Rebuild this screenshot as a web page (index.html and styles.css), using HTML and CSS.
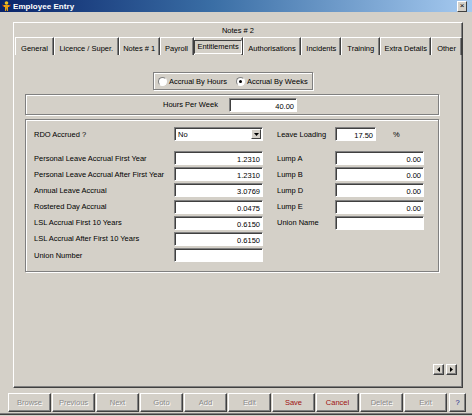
FILE: index.html
```html
<!DOCTYPE html>
<html>
<head>
<meta charset="utf-8">
<link rel="stylesheet" href="styles.css">
</head>
<body>
<div class="window">
  <div class="titlebar">
    <svg class="appicon" width="9" height="10" viewBox="0 0 9 10">
      <circle cx="4.5" cy="2" r="1.8" fill="#f0c020"/>
      <path d="M1 4 L8 4 L7 6 L6 6 L6 10 L5 10 L4.5 7 L4 10 L3 10 L3 6 L2 6 Z" fill="#e8a010"/>
      <path d="M0 3 L1 4 L2 6 L1 6 Z" fill="#c03010"/>
      <path d="M9 3 L8 4 L7 6 L8 6 Z" fill="#c03010"/>
    </svg>
    <span class="title">Employee Entry</span>
    <div class="closebtn">×</div>
  </div>
  <div class="client">
    <div class="tabctl">
      <div class="backtab">Notes # 2</div>
      <div class="tabrow">
        <div class="tab">General</div>
        <div class="tab">Licence / Super.</div>
        <div class="tab">Notes # 1</div>
        <div class="tab">Payroll</div>
        <div class="tab selected"><span class="focus">Entitlements</span></div>
        <div class="tab">Authorisations</div>
        <div class="tab">Incidents</div>
        <div class="tab">Training</div>
        <div class="tab">Extra Details</div>
        <div class="tab">Other</div>
      </div>
      <div class="page">
        <div class="radiobox">
          <label class="radio"><span class="circle"></span>Accrual By Hours</label>
          <label class="radio"><span class="circle on"></span>Accrual By Weeks</label>
        </div>
        <div class="hourspanel">
          <span class="hlabel">Hours Per Week</span>
          <div class="input hours">40.00</div>
        </div>
        <div class="mainpanel">
          <div class="toprow">
            <span class="lbl left">RDO Accrued ?</span>
            <div class="select"><span class="selval">No</span><span class="dropbtn"><svg width="5" height="3" viewBox="0 0 5 3"><path d="M0 0 H5 L2.5 3 Z" fill="#000"/></svg></span></div>
            <span class="lbl right">Leave Loading</span>
            <div class="input small">17.50</div>
            <span class="pct">%</span>
          </div>
          <div class="grid">
            <span class="lbl left">Personal Leave Accrual First Year</span>
            <div class="input">1.2310</div>
            <span class="lbl right">Lump A</span>
            <div class="input">0.00</div>

            <span class="lbl left">Personal Leave Accrual After First Year</span>
            <div class="input">1.2310</div>
            <span class="lbl right">Lump B</span>
            <div class="input">0.00</div>

            <span class="lbl left">Annual Leave Accrual</span>
            <div class="input">3.0769</div>
            <span class="lbl right">Lump D</span>
            <div class="input">0.00</div>

            <span class="lbl left">Rostered Day Accrual</span>
            <div class="input">0.0475</div>
            <span class="lbl right">Lump E</span>
            <div class="input">0.00</div>

            <span class="lbl left">LSL Accrual First 10 Years</span>
            <div class="input">0.6150</div>
            <span class="lbl right">Union Name</span>
            <div class="input"></div>

            <span class="lbl left">LSL Accrual After First 10 Years</span>
            <div class="input">0.6150</div>
            <span></span><span></span>

            <span class="lbl left">Union Number</span>
            <div class="input"></div>
            <span></span><span></span>
          </div>
        </div>
        <div class="scrollarrows">
          <div class="arrow"><svg width="3" height="5" viewBox="0 0 3 5"><path d="M3 0 V5 L0 2.5 Z" fill="#000"/></svg></div>
          <div class="arrow"><svg width="3" height="5" viewBox="0 0 3 5"><path d="M0 0 V5 L3 2.5 Z" fill="#000"/></svg></div>
        </div>
      </div>
    </div>
    <div class="buttons">
      <div class="btn disabled">Browse</div>
      <div class="btn disabled">Previous</div>
      <div class="btn disabled">Next</div>
      <div class="btn disabled">Goto</div>
      <div class="btn disabled">Add</div>
      <div class="btn disabled">Edit</div>
      <div class="btn red">Save</div>
      <div class="btn red">Cancel</div>
      <div class="btn disabled">Delete</div>
      <div class="btn disabled">Exit</div>
      <div class="btn help">?</div>
    </div>
  </div>
</div>
</body>
</html>
```
FILE: styles.css
```css
html, body {
  margin: 0;
  padding: 0;
}
body {
  width: 472px;
  height: 416px;
  overflow: hidden;
  background: #d4d0c8;
  font-family: "Liberation Sans", Arial, sans-serif;
  font-size: 7.5px;
  color: #000;
}
.window {
  width: 472px;
  height: 416px;
  display: flex;
  flex-direction: column;
  box-sizing: border-box;
  border-bottom: 1px solid #d4d0c8;
  white-space: nowrap;
}
.titlebar {
  height: 12px;
  flex: none;
  background: linear-gradient(to right, #0a246a 0%, #3a6ea5 45%, #a6caf0 100%);
  display: flex;
  align-items: center;
  color: #fff;
  font-weight: bold;
  font-size: 8px;
  padding-left: 2px;
}
.appicon {
  margin-right: 2px;
  flex: none;
}
.title {
  flex: 1;
  letter-spacing: 0.05px;
}
.closebtn {
  width: 8px;
  height: 9px;
  margin-right: 5px;
  background: #d4d0c8;
  border-top: 1px solid #fff;
  border-left: 1px solid #fff;
  border-right: 1px solid #404040;
  border-bottom: 1px solid #404040;
  color: #000;
  font-size: 8px;
  font-weight: normal;
  line-height: 8px;
  text-align: center;
}
.client {
  flex: 1;
  display: flex;
  flex-direction: column;
  padding: 10px 0 0 8px;
  border-bottom: 1px solid #404040;
  box-shadow: inset 0 -1px 0 #808080;
}
.tabctl {
  margin-left: 5px;
  width: 450px;
  height: 366px;
  display: flex;
  flex-direction: column;
}
.backtab {
  height: 15px;
  box-sizing: border-box;
  border-top: 1px solid #fff;
  border-left: 1px solid #fff;
  border-right: 1px solid #404040;
  box-shadow: inset -1px 0 0 #808080;
  display: flex;
  align-items: center;
  justify-content: center;
  padding-top: 1px;
}
.tabrow {
  height: 18px;
  display: flex;
  box-sizing: border-box;
  border-left: 1px solid #fff;
  border-right: 1px solid #404040;
  padding-left: 1px;
}
.tab {
  box-sizing: border-box;
  height: 18px;
  border-top: 1px solid #fff;
  border-left: 1px solid #fff;
  border-right: 1px solid #404040;
  box-shadow: inset -1px 0 0 #808080;
  display: flex;
  align-items: center;
  justify-content: center;
  padding-top: 3px;
}
.tab:nth-child(1) { width: 39px; }
.tab:nth-child(2) { width: 65px; }
.tab:nth-child(3) { width: 41px; }
.tab:nth-child(4) { width: 34px; }
.tab:nth-child(5) { width: 49px; }
.tab:nth-child(6) { width: 59px; }
.tab:nth-child(7) { width: 40px; }
.tab:nth-child(8) { width: 39px; }
.tab:nth-child(9) { width: 51px; }
.tab:nth-child(10) { width: 31px; }
.tab.selected {
  align-items: flex-start;
  padding-top: 2px;
}
.focus {
  display: block;
  padding: 1px 2px 2px 2px;
  border-top: 1px solid #404040;
  border-left: 1px solid #404040;
  border-right: 1px solid #fff;
  border-bottom: 1px solid #fff;
}
.page {
  flex: 1;
  display: flex;
  flex-direction: column;
  box-sizing: border-box;
  border-left: 1px solid #fff;
  border-right: 1px solid #404040;
  border-bottom: 1px solid #404040;
  box-shadow: inset -1px -1px 0 #808080;
  padding-left: 11px;
}
.radiobox {
  margin-top: 17px;
  margin-left: 128px;
  width: 160px;
  height: 18px;
  box-sizing: border-box;
  border: 1px solid #808080;
  box-shadow: 1px 1px 0 #fff, inset 1px 1px 0 #fff;
  display: flex;
  align-items: center;
  padding-left: 4px;
}
.radio {
  display: flex;
  align-items: center;
  margin-right: 9px;
}
.circle {
  width: 9px;
  height: 9px;
  box-sizing: border-box;
  border-radius: 50%;
  background: #fff;
  border: 1px solid;
  border-color: #808080 #fff #fff #808080;
  margin-right: 2px;
  position: relative;
}
.circle.on::after {
  content: "";
  position: absolute;
  left: 2px;
  top: 2px;
  width: 3px;
  height: 3px;
  border-radius: 50%;
  background: #000;
}
.hourspanel {
  margin-top: 4px;
  width: 414px;
  height: 21px;
  box-sizing: border-box;
  border: 1px solid #808080;
  box-shadow: 1px 1px 0 #fff, inset 1px 1px 0 #fff;
  display: flex;
  align-items: center;
  padding-left: 137px;
}
.hlabel {
  width: 66px;
}
.input {
  box-sizing: border-box;
  height: 14px;
  width: 89px;
  background: #fff;
  border-top: 1px solid #808080;
  border-left: 1px solid #808080;
  border-right: 1px solid #fff;
  border-bottom: 1px solid #fff;
  box-shadow: inset 1px 1px 0 #404040;
  text-align: right;
  padding-right: 2px;
  line-height: 13px;
  padding-top: 1px;
}
.input.hours {
  width: 68px;
}
.input.small {
  width: 41px;
}
.mainpanel {
  margin-top: 4px;
  width: 414px;
  height: 153px;
  box-sizing: border-box;
  border: 1px solid #808080;
  box-shadow: 1px 1px 0 #fff, inset 1px 1px 0 #fff;
  padding: 7px 0 0 8px;
}
.toprow {
  display: flex;
  align-items: center;
  height: 14px;
}
.lbl.left {
  width: 140px;
}
.lbl.right {
  width: 58px;
  padding-left: 14px;
}
.select {
  box-sizing: border-box;
  width: 89px;
  height: 14px;
  background: #fff;
  border-top: 1px solid #808080;
  border-left: 1px solid #808080;
  border-right: 1px solid #fff;
  border-bottom: 1px solid #fff;
  box-shadow: inset 1px 1px 0 #404040;
  display: flex;
  align-items: stretch;
}
.selval {
  flex: 1;
  padding-left: 3px;
  padding-top: 2px;
}
.dropbtn {
  width: 10px;
  margin: 1px 1px 1px 0;
  box-sizing: border-box;
  background: #d4d0c8;
  border-top: 1px solid #fff;
  border-left: 1px solid #fff;
  border-right: 1px solid #404040;
  border-bottom: 1px solid #404040;
  display: flex;
  align-items: center;
  justify-content: center;
}
.pct {
  margin-left: 17px;
}
.grid {
  margin-top: 10px;
  display: grid;
  grid-template-columns: 140px 89px 72px 89px;
  grid-auto-rows: 14px;
  row-gap: 2.2px;
  align-items: center;
}
.scrollarrows {
  margin-top: auto;
  margin-bottom: 12px;
  margin-right: 5px;
  align-self: flex-end;
  display: flex;
  gap: 2px;
}
.arrow {
  width: 11px;
  height: 11px;
  box-sizing: border-box;
  background: #d4d0c8;
  border-top: 1px solid #fff;
  border-left: 1px solid #fff;
  border-right: 1px solid #404040;
  border-bottom: 1px solid #404040;
  box-shadow: inset -1px -1px 0 #808080;
  display: flex;
  align-items: center;
  justify-content: center;
}
.buttons {
  margin-top: 5px;
  display: flex;
  gap: 1px;
}
.btn {
  width: 43px;
  height: 19px;
  box-sizing: border-box;
  border-top: 1px solid #fff;
  border-left: 1px solid #fff;
  border-right: 1px solid #404040;
  border-bottom: 1px solid #404040;
  box-shadow: inset -1px -1px 0 #808080;
  display: flex;
  align-items: center;
  justify-content: center;
}
.btn.disabled {
  color: #8a8a8a;
  text-shadow: 1px 1px 0 #fff;
}
.btn.red {
  color: #a01010;
}
.btn.help {
  width: 17px;
  margin-left: 1px;
  color: #1a2a90;
}
```
